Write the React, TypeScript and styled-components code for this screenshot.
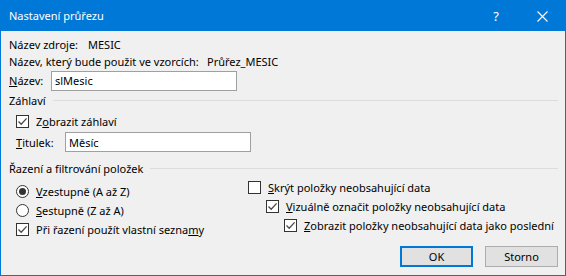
import React from 'react';
import styled, { createGlobalStyle } from 'styled-components';

const GlobalStyle = createGlobalStyle`
    body {
        margin: 0;
        background: #ffffff;
        font-family: "Noto Sans", "Liberation Sans", sans-serif;
        font-size: 11px;
        color: #000000;
    }
`

type CheckProps = {
    checked?: boolean,
}

const Check: React.FC<CheckProps> = ({ checked }) => (
    <CheckBox>
        {checked && (
            <svg width="11" height="11" viewBox="0 0 11 11">
                <path d="M1.5 5.5 L4.2 8.3 L9.6 2.4" fill="none" stroke="#4a4a4a" strokeWidth="1.3" />
            </svg>
        )}
    </CheckBox>
)

const App: React.FC = () => {
    return (
        <>
            <GlobalStyle />
            <Window>
                <TitleBar>
                    <Title>Nastavení průřezu</Title>
                    <Help>?</Help>
                    <Close>
                        <svg width="11" height="11" viewBox="0 0 11 11">
                            <path d="M0.5 0.5 L10.5 10.5 M10.5 0.5 L0.5 10.5" stroke="#ffffff" strokeWidth="1.1" />
                        </svg>
                    </Close>
                </TitleBar>
                <Body>
                    <Row h={17}>
                        <Label w={79}>Název zdroje:</Label>
                        <span>MESIC</span>
                    </Row>
                    <Row h={17}>
                        <Label w={198}>Název, který bude použit ve vzorcích:</Label>
                        <span>Průřez_MESIC</span>
                    </Row>
                    <Row h={21}>
                        <Label w={42}><u>N</u>ázev:</Label>
                        <Input w={186}>slMesic</Input>
                    </Row>
                    <Section h={19}>
                        <span>Záhlaví</span>
                        <Rule />
                    </Section>
                    <Row h={22} indent={7}>
                        <Check checked />
                        <CheckText>Z<u>o</u>brazit záhlaví</CheckText>
                    </Row>
                    <Row h={20} indent={7}>
                        <Label w={49}><u>T</u>itulek:</Label>
                        <Input w={186}>Měsíc</Input>
                    </Row>
                    <Section h={20} top={6}>
                        <span>Řazení a filtrování položek</span>
                        <Rule />
                    </Section>
                    <Columns>
                        <Column w={232} top={4}>
                            <Option>
                                <Radio selected />
                                <CheckText><u>V</u>zestupně (A až Z)</CheckText>
                            </Option>
                            <Option>
                                <Radio />
                                <CheckText><u>S</u>estupně (Z až A)</CheckText>
                            </Option>
                            <Option>
                                <Check checked />
                                <CheckText>Při řazení použít vlastní sezna<u>m</u>y</CheckText>
                            </Option>
                        </Column>
                        <Column top={0}>
                            <Option>
                                <Check />
                                <CheckText><u>S</u>krýt položky neobsahující data</CheckText>
                            </Option>
                            <Option indent={18}>
                                <Check checked />
                                <CheckText><u>V</u>izuálně označit položky neobsahující data</CheckText>
                            </Option>
                            <Option indent={36}>
                                <Check checked />
                                <CheckText><u>Z</u>obrazit položky neobsahující data jako poslední</CheckText>
                            </Option>
                        </Column>
                    </Columns>
                    <Footer>
                        <Button primary>OK</Button>
                        <Button>Storno</Button>
                    </Footer>
                </Body>
            </Window>
        </>
    )
}

export default App;

const Window = styled.div`
    width: 566px;
    height: 276px;
    box-sizing: border-box;
    border: 1px solid #0078d7;
    background-color: #f0f0f0;
    display: flex;
    flex-direction: column;
`
const TitleBar = styled.div`
    height: 30px;
    background-color: #0078d7;
    color: #ffffff;
    display: flex;
    align-items: center;
    padding-left: 8px;
`
const Title = styled.div`
    flex: 1;
    font-size: 11px;
    padding-bottom: 1px;
`
const Help = styled.div`
    font-size: 13px;
    width: 46px;
    text-align: center;
`
const Close = styled.div`
    width: 46px;
    height: 30px;
    display: flex;
    align-items: center;
    justify-content: center;
`
const Body = styled.div`
    flex: 1;
    display: flex;
    flex-direction: column;
    padding: 5px 7px 0 8px;
`
const Row = styled.div<{ h: number, indent?: number }>`
    height: ${p => p.h}px;
    display: flex;
    align-items: center;
    padding-left: ${p => p.indent || 0}px;
    white-space: nowrap;
`
const Label = styled.span<{ w: number }>`
    width: ${p => p.w}px;
    flex-shrink: 0;
`
const Input = styled.div<{ w: number }>`
    width: ${p => p.w}px;
    height: 20px;
    box-sizing: border-box;
    border: 1px solid #a0a0a0;
    background-color: #ffffff;
    padding-left: 3px;
    display: flex;
    align-items: center;
`
const Section = styled.div<{ h: number, top?: number }>`
    height: ${p => p.h}px;
    margin-top: ${p => p.top || 0}px;
    display: flex;
    align-items: center;
    gap: 7px;
`
const Rule = styled.div`
    flex: 1;
    height: 1px;
    background-color: #dcdcdc;
`
const CheckBox = styled.div`
    width: 13px;
    height: 13px;
    box-sizing: border-box;
    border: 1px solid #333333;
    background-color: #ffffff;
    display: flex;
    align-items: center;
    justify-content: center;
    flex-shrink: 0;
`
const Radio = styled.div<{ selected?: boolean }>`
    width: 13px;
    height: 13px;
    box-sizing: border-box;
    border: 1px solid #333333;
    border-radius: 50%;
    background-color: #ffffff;
    display: flex;
    align-items: center;
    justify-content: center;
    flex-shrink: 0;

    &::after {
        content: "";
        display: ${p => p.selected ? 'block' : 'none'};
        width: 7px;
        height: 7px;
        border-radius: 50%;
        background-color: #333333;
    }
`
const CheckText = styled.span`
    margin-left: 7px;
    white-space: nowrap;
`
const Columns = styled.div`
    display: flex;
    padding-left: 7px;
`
const Column = styled.div<{ w?: number, top: number }>`
    width: ${p => p.w ? `${p.w}px` : 'auto'};
    flex-shrink: 0;
    padding-top: ${p => p.top}px;
    display: flex;
    flex-direction: column;
`
const Option = styled.div<{ indent?: number }>`
    height: 19px;
    display: flex;
    align-items: center;
    padding-left: ${p => p.indent || 0}px;
`
const Footer = styled.div`
    display: flex;
    justify-content: flex-end;
    gap: 12px;
    margin-top: 7px;
`
const Button = styled.button<{ primary?: boolean }>`
    width: 73px;
    height: 21px;
    box-sizing: border-box;
    font-family: inherit;
    font-size: 11px;
    color: #000000;
    background-color: #e1e1e1;
    border: ${p => p.primary ? '2px solid #0078d7' : '1px solid #adadad'};
    padding: 0;
    display: flex;
    align-items: center;
    justify-content: center;
`
